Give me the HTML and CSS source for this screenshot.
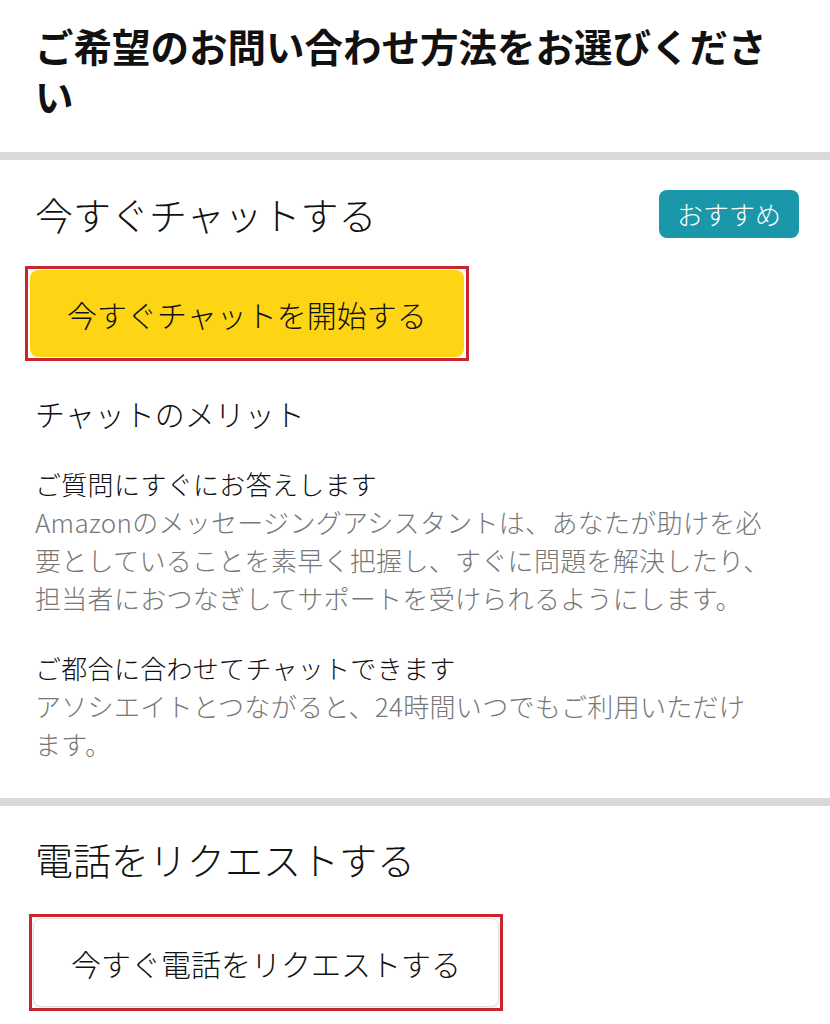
FILE: index.html
```html
<!DOCTYPE html>
<html lang="ja">
<head>
    <meta charset="UTF-8">
    <meta name="viewport" content="width=device-width, initial-scale=1.0">
    <title>お問い合わせ方法</title>
    <link rel="stylesheet" href="styles.css">
</head>
<body>
    <header class="page-head">
        <h1>ご希望のお問い合わせ方法をお選びください</h1>
    </header>

    <div class="divider"></div>

    <section class="contact-section chat">
        <div class="section-head">
            <h2>今すぐチャットする</h2>
            <span class="badge">おすすめ</span>
        </div>

        <div class="highlight highlight-chat">
            <button class="btn btn-primary">今すぐチャットを開始する</button>
        </div>

        <h3 class="merit-title">チャットのメリット</h3>

        <div class="merit">
            <h4>ご質問にすぐにお答えします</h4>
            <p>Amazonのメッセージングアシスタントは、あなたが助けを必<br>要としていることを素早く把握し、すぐに問題を解決したり、<br>担当者におつなぎしてサポートを受けられるようにします。</p>
        </div>

        <div class="merit">
            <h4>ご都合に合わせてチャットできます</h4>
            <p>アソシエイトとつながると、24時間いつでもご利用いただけ<br>ます。</p>
        </div>
    </section>

    <div class="divider"></div>

    <section class="contact-section phone">
        <div class="section-head">
            <h2>電話をリクエストする</h2>
        </div>

        <div class="highlight highlight-phone">
            <button class="btn btn-secondary">今すぐ電話をリクエストする</button>
        </div>
    </section>
</body>
</html>
```

FILE: styles.css
```css
body {
    margin: 0;
    font-family: "Noto Sans CJK JP", "Noto Sans", sans-serif;
    color: #111;
    background-color: #fff;
}
h1, h2, h3, h4, p {
    margin: 0;
}
.page-head {
    padding: 20px 40px 32px 35px;
}
.page-head h1 {
    font-size: 38.5px;
    line-height: 50px;
    font-weight: 700;
}
.divider {
    height: 8px;
    background-color: #d9d9d9;
}
.contact-section {
    padding: 30px 31px 35px 35px;
}
.contact-section.phone {
    padding-top: 29px;
    padding-bottom: 20px;
}
.section-head {
    display: flex;
    justify-content: space-between;
    align-items: center;
    height: 48px;
}
.section-head h2 {
    font-size: 38px;
    line-height: 48px;
    font-weight: 300;
}
.badge {
    background-color: #1a97a8;
    color: #fff;
    font-size: 26px;
    line-height: 48px;
    padding: 0 18px;
    border-radius: 8px;
    font-weight: 300;
}
.highlight {
    display: inline-block;
    border: 3px solid #c9252f;
    padding: 1px 2px;
}
.highlight-chat {
    margin: 28px 0 0 -10px;
}
.highlight-phone {
    margin: 31px 0 0 -6px;
    padding: 1px 1px;
}
.btn {
    display: block;
    font-family: inherit;
    font-size: 30px;
    font-weight: 300;
    color: #111;
    padding: 0 37px;
    border-radius: 8px;
    cursor: pointer;
}
.btn-primary {
    height: 87px;
    background-color: #fed514;
    border: none;
}
.btn-secondary {
    height: 89px;
    background-color: #fff;
    border: 1px solid #dedede;
    box-shadow: 0 1px 3px rgba(0,0,0,0.08);
}
.merit-title {
    margin-top: 32px;
    font-size: 30px;
    line-height: 40px;
    font-weight: 300;
}
.merit {
    margin-top: 32px;
    font-size: 26px;
    letter-spacing: 0.3px;
    line-height: 38px;
    font-weight: 300;
}
.merit h4 {
    font-weight: 300;
}
.merit p {
    color: #777;
}
```
